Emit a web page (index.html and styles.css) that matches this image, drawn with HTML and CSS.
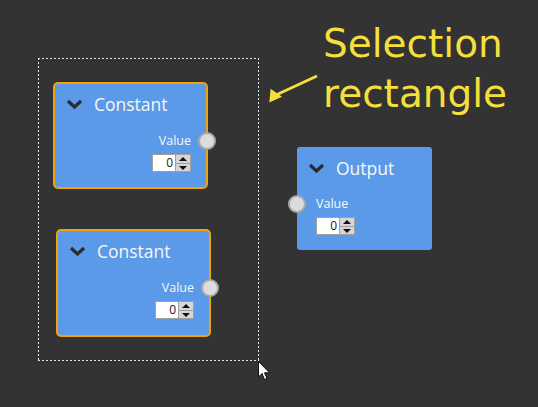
FILE: index.html
```html
<!DOCTYPE html>
<html lang="en">
<head>
    <meta charset="UTF-8">
    <meta name="viewport" content="width=device-width, initial-scale=1.0">
    <title>Node editor</title>
    <link rel="stylesheet" href="styles.css">
</head>
<body>
  <div id="canvas">

    <div class="selection-rect"></div>

    <div class="node node-selected node-a">
      <div class="node-header">
        <svg class="chevron" width="17" height="12" viewBox="0 0 17 12"><polyline points="2,3 8.5,9 15,3" /></svg>
        <span class="node-title">Constant</span>
      </div>
      <div class="port port-out">
        <span class="port-label">Value</span>
        <span class="connector"></span>
      </div>
      <div class="spin-row">
        <div class="spin">
          <span class="spin-value">0</span>
          <span class="spin-btns">
            <span class="spin-up"></span>
            <span class="spin-down"></span>
          </span>
        </div>
      </div>
    </div>

    <div class="node node-selected node-b">
      <div class="node-header">
        <svg class="chevron" width="17" height="12" viewBox="0 0 17 12"><polyline points="2,3 8.5,9 15,3" /></svg>
        <span class="node-title">Constant</span>
      </div>
      <div class="port port-out">
        <span class="port-label">Value</span>
        <span class="connector"></span>
      </div>
      <div class="spin-row">
        <div class="spin">
          <span class="spin-value">0</span>
          <span class="spin-btns">
            <span class="spin-up"></span>
            <span class="spin-down"></span>
          </span>
        </div>
      </div>
    </div>

    <div class="node node-output">
      <div class="node-header">
        <svg class="chevron" width="17" height="12" viewBox="0 0 17 12"><polyline points="2,3 8.5,9 15,3" /></svg>
        <span class="node-title">Output</span>
      </div>
      <div class="port port-in">
        <span class="connector"></span>
        <span class="port-label">Value</span>
      </div>
      <div class="spin-row spin-row-left">
        <div class="spin">
          <span class="spin-value">0</span>
          <span class="spin-btns">
            <span class="spin-up"></span>
            <span class="spin-down"></span>
          </span>
        </div>
      </div>
    </div>

    <div class="note">Selection<br>rectangle</div>

    <svg class="note-arrow" width="60" height="40" viewBox="0 0 60 40">
      <line x1="55" y1="7" x2="14" y2="26" />
      <polygon points="5,31 12,19 19,31" transform="rotate(-25 12 27)" />
    </svg>

    <svg class="cursor" width="14" height="20" viewBox="0 0 14 20">
      <path d="M0.5,0.5 L0.5,16 L4,12.5 L6.5,18.5 L9,17.5 L6.5,11.8 L11.5,11.8 Z" />
    </svg>

  </div>
</body>
</html>
```

FILE: styles.css
```css
*{
  margin: 0;
  padding: 0;
  box-sizing: border-box;
}

body{
  background-color: #333333;
  font-family: 'Open Sans', 'Noto Sans', sans-serif;
  overflow: hidden;
}

#canvas{
  position: relative;
  width: 538px;
  height: 407px;
  background-color: #333333;
}

.selection-rect{
  position: absolute;
  left: 38px;
  top: 58px;
  width: 221px;
  height: 303px;
  background:
    repeating-linear-gradient(to right, #e6e6e6 0 2px, transparent 2px 4px) top / 100% 1px no-repeat,
    repeating-linear-gradient(to right, #e6e6e6 0 2px, transparent 2px 4px) bottom / 100% 1px no-repeat,
    repeating-linear-gradient(to bottom, #e6e6e6 0 2px, transparent 2px 4px) left / 1px 100% no-repeat,
    repeating-linear-gradient(to bottom, #e6e6e6 0 2px, transparent 2px 4px) right / 1px 100% no-repeat;
}

/* nodes */

.node{
  position: absolute;
  display: flex;
  flex-direction: column;
  background-color: #5b9ae8;
  border-radius: 5px;
  color: #ffffff;
}

.node-selected{
  width: 155px;
  height: 107px;
  border: 2.5px solid #f0a30a;
  padding: 7px 15px 0 11px;
}

.node-a{
  left: 53px;
  top: 82px;
}

.node-b{
  left: 56px;
  top: 229px;
  height: 108px;
}

.node-output{
  left: 297px;
  top: 147px;
  width: 135px;
  height: 103px;
  padding: 8px 10px 0 11px;
  border-radius: 3px;
}

.node-header{
  display: flex;
  align-items: center;
  column-gap: 11px;
  height: 26px;
}

.chevron{
  flex-shrink: 0;
}

.chevron polyline{
  fill: none;
  stroke: #2b2b2b;
  stroke-width: 3.2;
}

.node-title{
  font-size: 17.5px;
  line-height: 26px;
  color: #f7f7f7;
}

.port{
  position: relative;
  display: flex;
  align-items: center;
  height: 16px;
  margin-top: 16px;
}

.port-out{
  justify-content: flex-end;
}

.node-output .port{
  margin-top: 15px;
  padding-left: 8px;
}

.port-label{
  font-size: 12.5px;
  line-height: 16px;
  color: #f7f7f7;
}

.connector{
  position: absolute;
  width: 18px;
  height: 18px;
  border-radius: 50%;
  background-color: #dcdcdc;
  border: 2px solid #a9a9a9;
  top: -1px;
}

.port-out .connector{
  right: -25px;
}

.port-in .connector{
  left: -20px;
}

.spin-row{
  display: flex;
  justify-content: flex-end;
  margin-top: 5px;
}

.spin-row-left{
  justify-content: flex-start;
  margin-top: 5px;
  padding-left: 8px;
}

.spin{
  display: flex;
  height: 18px;
  border: 1px solid #a0a0a0;
  background-color: #ffffff;
}

.spin-value{
  width: 22px;
  padding-right: 2px;
  text-align: right;
  font-size: 12px;
  line-height: 16px;
  color: #1a1a1a;
}

.spin-btns{
  display: flex;
  flex-direction: column;
  width: 15px;
  border-left: 1px solid #a0a0a0;
  background-color: #d6d6d6;
}

.spin-up, .spin-down{
  position: relative;
  flex: 1;
}

.spin-up{
  border-bottom: 1px solid #a0a0a0;
}

.spin-up::after, .spin-down::after{
  content: "";
  position: absolute;
  left: 3px;
  width: 0;
  height: 0;
  border-left: 4px solid transparent;
  border-right: 4px solid transparent;
}

.spin-up::after{
  top: 2px;
  border-bottom: 4px solid #111111;
}

.spin-down::after{
  top: 2px;
  border-top: 4px solid #111111;
}

/* annotation */

.note{
  position: absolute;
  left: 323px;
  top: 19px;
  font-family: 'DejaVu Sans', sans-serif;
  font-size: 39px;
  line-height: 50px;
  color: #f4df3c;
}

.note-arrow{
  position: absolute;
  left: 262px;
  top: 69px;
}

.note-arrow line{
  stroke: #f4df3c;
  stroke-width: 3;
}

.note-arrow polygon{
  fill: #f4df3c;
}

.cursor{
  position: absolute;
  left: 258px;
  top: 361px;
}

.cursor path{
  fill: #ffffff;
  stroke: #111111;
  stroke-width: 1;
}
```
